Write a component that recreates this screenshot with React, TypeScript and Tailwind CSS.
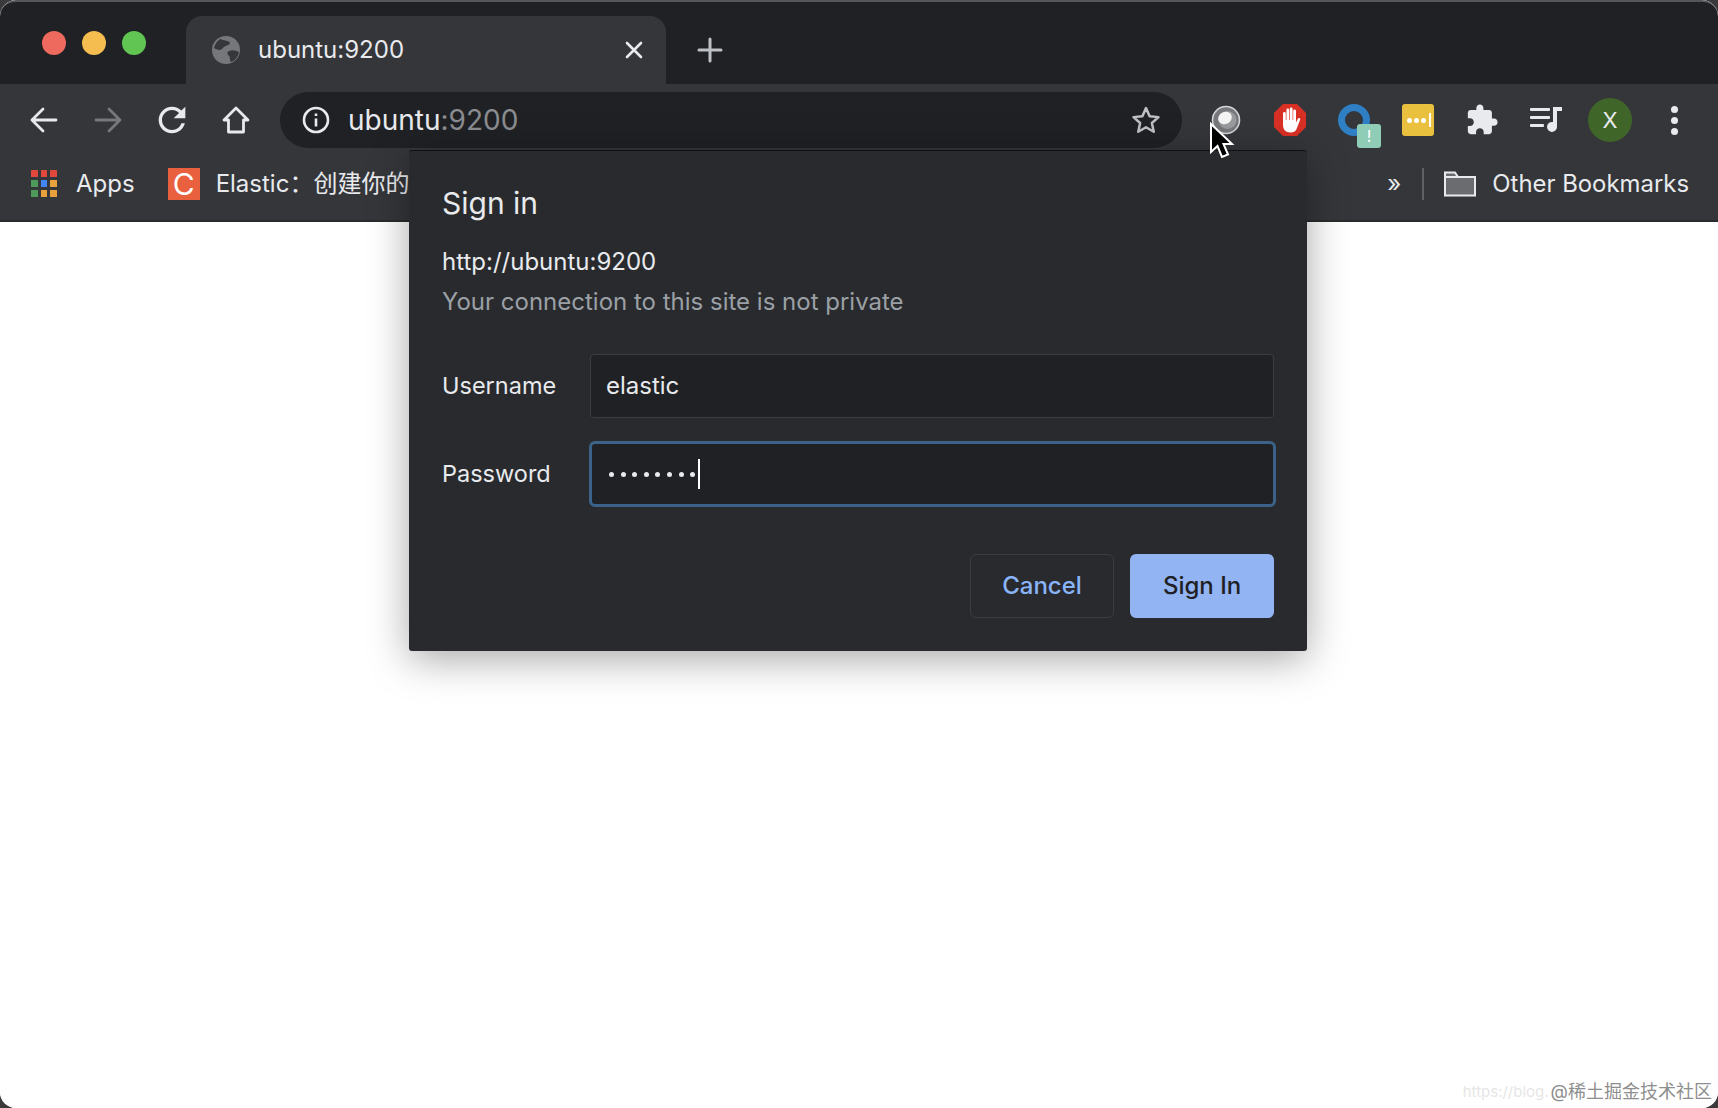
import React from "react";

const Cell = ({ children }: { children: React.ReactNode }) => (
  <div className="w-[64px] h-[56px] flex items-center justify-center shrink-0 relative">{children}</div>
);

const APPS = ["#e2483d", "#e2483d", "#e2483d", "#4d9a5b", "#4285f4", "#e9a23b", "#4d9a5b", "#e9a23b", "#e9a23b"];

export default function App() {
  return (
    <div className="w-[1718px] h-[1108px] bg-[#3a3a3a] overflow-hidden relative" style={{ fontFamily: "Inter, 'Noto Sans CJK SC', sans-serif" }}>
      <div className="w-full h-full rounded-[16px] overflow-hidden flex flex-col bg-white">
        {/* Tab strip */}
        <div className="h-[84px] bg-[#202124] border-t-2 border-[#55565a] rounded-t-[16px] flex shrink-0">
          <div className="w-[186px] flex gap-[16px] pl-[42px] pt-[29px] shrink-0">
            <span className="w-[24px] h-[24px] rounded-full bg-[#ee6a5f]" />
            <span className="w-[24px] h-[24px] rounded-full bg-[#f5bd4f]" />
            <span className="w-[24px] h-[24px] rounded-full bg-[#61c554]" />
          </div>
          <div className="w-[480px] mt-[14px] bg-[#35363a] rounded-t-[16px] flex items-center pl-[26px] pr-[22px] shrink-0">
            <svg width="28" height="28" viewBox="0 0 28 28" className="shrink-0">
              <circle cx="14" cy="14" r="14" fill="#76777a" />
              <path d="M8 3 C12 5 17 4 18 7 C17 10 13 9 11 12 C9 15 5 14 2 12 C3 8 5 5 8 3Z M17 15 C21 13 25 15 27 16 C26 21 23 25 19 26 C17 23 19 21 16 19 C15 17 15 16 17 15Z" fill="#36373a" />
            </svg>
            <span className="ml-[18px] text-[24px] text-[#e8eaed]">ubuntu:9200</span>
            <svg width="20" height="20" viewBox="0 0 20 20" className="ml-auto" stroke="#e8eaed" strokeWidth="2.6" strokeLinecap="round">
              <path d="M3 3 L17 17 M17 3 L3 17" />
            </svg>
          </div>
          <div className="ml-[31px] mt-[14px] self-center">
            <svg width="26" height="26" viewBox="0 0 26 26" stroke="#bdc1c6" strokeWidth="3" strokeLinecap="round">
              <path d="M13 2 V24 M2 13 H24" />
            </svg>
          </div>
        </div>
        {/* Toolbar */}
        <div className="bg-[#35363a] h-[138px] shrink-0 flex flex-col border-b-2 border-[#2a2b2e]">
          <div className="h-[72px] flex items-center pl-[12px] shrink-0">
            <Cell>
              <svg width="30" height="30" viewBox="0 0 30 30" fill="none" stroke="#e8eaed" strokeWidth="2.8" strokeLinecap="round" strokeLinejoin="round">
                <path d="M27 15 H3 M14 4 L3 15 L14 26" />
              </svg>
            </Cell>
            <Cell>
              <svg width="30" height="30" viewBox="0 0 30 30" fill="none" stroke="#77787b" strokeWidth="2.8" strokeLinecap="round" strokeLinejoin="round">
                <path d="M3 15 H27 M16 4 L27 15 L16 26" />
              </svg>
            </Cell>
            <Cell>
              <svg width="40" height="40" viewBox="0 0 24 24" fill="#e8eaed">
                <path d="M17.65 6.35A7.958 7.958 0 0 0 12 4c-4.42 0-7.99 3.58-7.99 8s3.57 8 7.99 8c3.73 0 6.84-2.55 7.73-6h-2.08A5.99 5.99 0 0 1 12 18c-3.31 0-6-2.69-6-6s2.69-6 6-6c1.66 0 3.14.69 4.22 1.78L13 11h7V4l-2.35 2.35z" />
              </svg>
            </Cell>
            <Cell>
              <svg width="30" height="30" viewBox="0 0 30 30" fill="none" stroke="#e8eaed" strokeWidth="2.8" strokeLinejoin="round">
                <path d="M15 3 L27 15 H22.5 V27 H7.5 V15 H3 Z" />
              </svg>
            </Cell>
            <div className="ml-[12px] w-[902px] h-[56px] rounded-full bg-[#202124] flex items-center pl-[22px] pr-[21px] shrink-0">
              <svg width="28" height="28" viewBox="0 0 28 28" className="shrink-0" fill="none" stroke="#e8eaed" strokeWidth="2.6">
                <circle cx="14" cy="14" r="12" />
                <path d="M14 12.5 V20.5 M14 7.5 V10" />
              </svg>
              <span className="ml-[18px] text-[28px] text-[#e8eaed]">
                ubuntu<span className="text-[#8b8d91]">:9200</span>
              </span>
              <svg width="30" height="30" viewBox="0 0 24 24" className="ml-auto" fill="none" stroke="#bdc1c6" strokeWidth="2" strokeLinejoin="round">
                <path d="M12 2.5 L14.9 9 L22 9.7 L16.7 14.4 L18.2 21.4 L12 17.8 L5.8 21.4 L7.3 14.4 L2 9.7 L9.1 9 Z" />
              </svg>
            </div>
            <div className="ml-[12px] flex items-center shrink-0">
              <Cell>
                <svg width="30" height="30" viewBox="0 0 30 30">
                  <circle cx="15" cy="15" r="13.5" fill="#77787b" stroke="#d5d6d8" strokeWidth="1.6" />
                  <circle cx="16.5" cy="15" r="9" fill="#9a9b9e" />
                  <ellipse cx="14" cy="13" rx="7" ry="6" fill="#f5f5f5" transform="rotate(-25 14 13)" />
                </svg>
              </Cell>
              <Cell>
                <svg width="34" height="34" viewBox="0 0 34 34">
                  <path d="M10 1 H24 L33 10 V24 L24 33 H10 L1 24 V10 Z" fill="#d93025" />
                  <g fill="#fff">
                    <rect x="10" y="9" width="2.8" height="12" rx="1.4" />
                    <rect x="13.4" y="5.5" width="2.8" height="14" rx="1.4" />
                    <rect x="16.8" y="4.5" width="2.8" height="15" rx="1.4" />
                    <rect x="20.2" y="6.5" width="2.8" height="13" rx="1.4" />
                    <path d="M10 17 H23 V19.5 L25 15.5 C25.6 14.4 27.6 15 27.2 16.4 L24 25 C23 28 21 29.5 17.5 29.5 C12.5 29.5 10 26.5 10 22 Z" />
                  </g>
                </svg>
              </Cell>
              <Cell>
                <div className="relative w-[32px] h-[32px]">
                  <div className="w-[32px] h-[32px] rounded-full border-[7px] border-[#2e7fc4]" />
                  <div className="absolute left-[19px] top-[20px] w-[24px] h-[24px] rounded-[3px] bg-[#8fcdb6] text-white text-[16px] leading-[24px] text-center">!</div>
                </div>
              </Cell>
              <Cell>
                <div className="w-[32px] h-[32px] rounded-[3px] bg-[#e9c13f] flex items-center justify-center gap-[2px] pl-[1px]">
                  <span className="w-[5px] h-[5px] rounded-full bg-white" />
                  <span className="w-[5px] h-[5px] rounded-full bg-white" />
                  <span className="w-[5px] h-[5px] rounded-full bg-white" />
                  <span className="w-[2px] h-[14px] bg-white ml-[1px]" />
                </div>
              </Cell>
              <Cell>
                <svg width="34" height="34" viewBox="0 0 24 24" fill="#e8eaed">
                  <path d="M20.5 11H19V7c0-1.1-.9-2-2-2h-4V3.5C13 2.12 11.88 1 10.5 1S8 2.12 8 3.5V5H4c-1.1 0-1.99.9-1.99 2v3.8H3.5c1.49 0 2.7 1.21 2.7 2.7s-1.21 2.7-2.7 2.7H2V20c0 1.1.9 2 2 2h3.8v-1.5c0-1.49 1.21-2.7 2.7-2.7 1.49 0 2.7 1.21 2.7 2.7V22H17c1.1 0 2-.9 2-2v-4h1.5c1.38 0 2.5-1.12 2.5-2.5S21.88 11 20.5 11z" />
                </svg>
              </Cell>
              <Cell>
                <svg width="34" height="30" viewBox="0 0 34 30" fill="#e8eaed">
                  <rect x="1" y="3" width="20" height="3" rx="1" />
                  <rect x="1" y="11" width="20" height="3" rx="1" />
                  <rect x="1" y="19" width="14" height="3" rx="1" />
                  <path d="M24 2 H33 V6 H28 V22 A5 5 0 1 1 24 17 Z" />
                </svg>
              </Cell>
              <Cell>
                <div className="w-[44px] h-[44px] rounded-full bg-[#3f6529] flex items-center justify-center text-[#e8eaed] text-[22px]">X</div>
              </Cell>
              <Cell>
                <div className="flex flex-col gap-[4px]">
                  <span className="w-[7px] h-[7px] rounded-full bg-[#e8eaed]" />
                  <span className="w-[7px] h-[7px] rounded-full bg-[#e8eaed]" />
                  <span className="w-[7px] h-[7px] rounded-full bg-[#e8eaed]" />
                </div>
              </Cell>
            </div>
          </div>
          {/* Bookmarks */}
          <div className="flex items-center h-[53px] pl-[31px] pr-[29px] text-[24px] text-[#e8eaed] pt-[2px]">
            <div className="grid grid-cols-3 gap-[3px] w-[26px] shrink-0">
              {APPS.map((c, i) => (
                <span key={i} className="h-[7px]" style={{ backgroundColor: c }} />
              ))}
            </div>
            <span className="ml-[19px]">Apps</span>
            <div className="ml-[33px] w-[32px] h-[32px] bg-[#e9603f] text-white text-[30px] leading-[32px] text-center shrink-0">C</div>
            <span className="ml-[16px] whitespace-nowrap">Elastic：创建你的</span>
            <span className="ml-auto text-[24px] mr-[21px]">»</span>
            <span className="w-[2px] h-[32px] bg-[#5f6064] mr-[20px]" />
            <svg width="32" height="26" viewBox="0 0 32 26" fill="none">
              <path d="M1 24.5 V1.5 H11 L14 6 H31 V24.5 Z" fill="#6b6c6f" stroke="#e8eaed" strokeWidth="2" />
              <path d="M1 6 H14" stroke="#e8eaed" strokeWidth="2" />
            </svg>
            <span className="ml-[16px] whitespace-nowrap text-[23.9px]">Other Bookmarks</span>
          </div>
        </div>
        {/* Page */}
        <div className="flex-1 bg-white" />
      </div>

      {/* Auth dialog */}
      <div className="absolute left-[409px] top-[150px] w-[898px] h-[501px] bg-[#292a2d] rounded-[3px] border-t border-black/60 shadow-[0_8px_40px_rgba(0,0,0,0.35)] pt-[34px] px-[33px] flex flex-col">
        <div className="text-[30px] leading-[36px] text-[#e8eaed]">Sign in</div>
        <div className="mt-[25px] text-[24px] leading-[32px] text-[#e8eaed]">http://ubuntu:9200</div>
        <div className="mt-[8px] text-[24px] leading-[32px] text-[#9aa0a6]">Your connection to this site is not private</div>
        <div className="mt-[36px] flex items-center">
          <div className="w-[148px] text-[23.5px] text-[#e8eaed]">Username</div>
          <div className="w-[684px] h-[64px] bg-[#202124] rounded-[4px] border border-[#3c3d40] flex items-center pl-[15px] text-[24px] text-[#e8eaed]">elastic</div>
        </div>
        <div className="mt-[23px] flex items-center">
          <div className="w-[147px] shrink-0 text-[23.5px] text-[#e8eaed]">Password</div>
          <div className="w-[687px] shrink-0 h-[66px] bg-[#202124] rounded-[6px] border-[3px] border-[#3b6289] flex items-center pl-[17px] text-[#e8eaed]">
            <div className="flex gap-[6.6px]">
              {[0, 1, 2, 3, 4, 5, 6, 7].map((k) => (
                <span key={k} className="w-[5px] h-[5px] rounded-full bg-[#e8eaed]" />
              ))}
            </div>
            <span className="w-[2px] h-[30px] bg-white ml-[3px]" />
          </div>
        </div>
        <div className="mt-[47px] flex justify-end gap-[16px]">
          <div className="w-[144px] h-[64px] rounded-[6px] border border-[#3c3d40] flex items-center justify-center text-[24px] font-medium text-[#8ab4f8]">Cancel</div>
          <div className="w-[144px] h-[64px] rounded-[6px] bg-[#93b4f3] flex items-center justify-center text-[24px] font-medium text-[#202124]">Sign In</div>
        </div>
      </div>

      {/* Mouse pointer */}
      <svg width="26" height="38" viewBox="0 0 26 38" className="absolute left-[1209px] top-[122px]">
        <path d="M2 2 V30 L8.5 24 L13 35 L19 32.5 L14.5 22 H23 Z" fill="#000" stroke="#fff" strokeWidth="2" strokeLinejoin="miter" />
      </svg>

      {/* Watermark */}
      <div className="absolute right-[6px] top-[1080px] flex items-center whitespace-nowrap text-[18px] leading-[24px]">
        <span className="text-[#e6e6e6] mr-[2px] text-[15px]">https://blog.</span>
        <span className="text-[#8e8e8e]">@稀土掘金技术社区</span>
      </div>
    </div>
  );
}
